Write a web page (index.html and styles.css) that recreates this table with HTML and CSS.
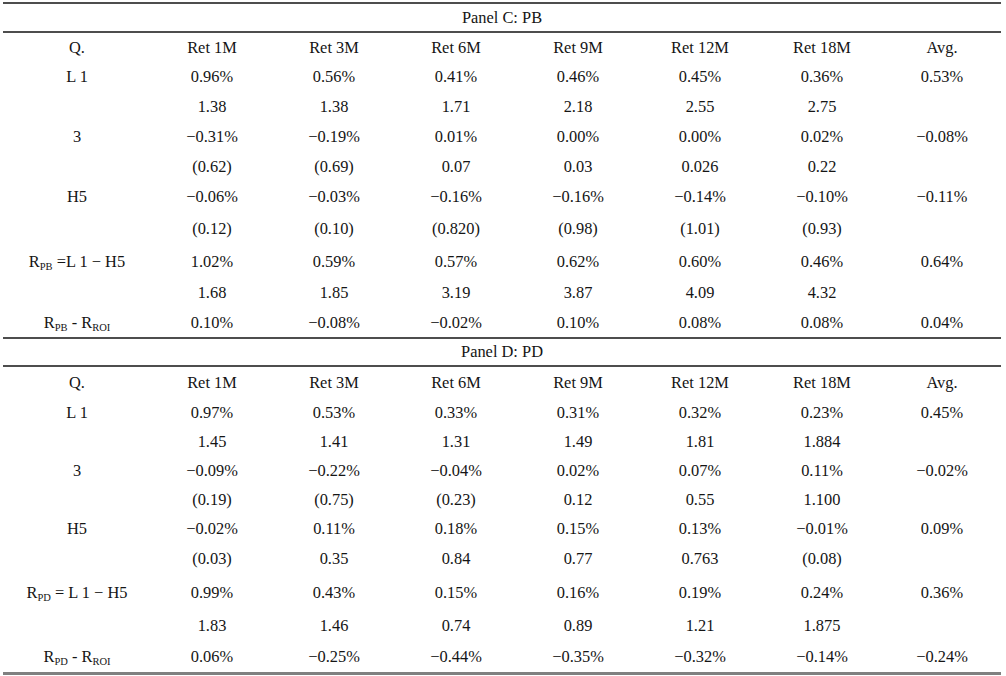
FILE: index.html
```html
<!DOCTYPE html>
<html lang="en">
<head>
<meta charset="utf-8">
<title>Panel C and D</title>
<link rel="stylesheet" href="styles.css">
</head>
<body>
<div class="table">
  <div class="panel-title pc">Panel C: PB</div>
  <div class="row h29"><span>Q.</span><span>Ret 1M</span><span>Ret 3M</span><span>Ret 6M</span><span>Ret 9M</span><span>Ret 12M</span><span>Ret 18M</span><span>Avg.</span></div>
  <div class="row h30"><span>L 1</span><span>0.96%</span><span>0.56%</span><span>0.41%</span><span>0.46%</span><span>0.45%</span><span>0.36%</span><span>0.53%</span></div>
  <div class="row h30"><span></span><span>1.38</span><span>1.38</span><span>1.71</span><span>2.18</span><span>2.55</span><span>2.75</span><span></span></div>
  <div class="row h30"><span>3</span><span>&minus;0.31%</span><span>&minus;0.19%</span><span>0.01%</span><span>0.00%</span><span>0.00%</span><span>0.02%</span><span>&minus;0.08%</span></div>
  <div class="row h29"><span></span><span>(0.62)</span><span>(0.69)</span><span>0.07</span><span>0.03</span><span>0.026</span><span>0.22</span><span></span></div>
  <div class="row h32"><span>H5</span><span>&minus;0.06%</span><span>&minus;0.03%</span><span>&minus;0.16%</span><span>&minus;0.16%</span><span>&minus;0.14%</span><span>&minus;0.10%</span><span>&minus;0.11%</span></div>
  <div class="row h32"><span></span><span>(0.12)</span><span>(0.10)</span><span>(0.820)</span><span>(0.98)</span><span>(1.01)</span><span>(0.93)</span><span></span></div>
  <div class="row h33"><span>R<sub class="sub">PB</sub> =L 1 &minus; H5</span><span>1.02%</span><span>0.59%</span><span>0.57%</span><span>0.62%</span><span>0.60%</span><span>0.46%</span><span>0.64%</span></div>
  <div class="row h30"><span></span><span>1.68</span><span>1.85</span><span>3.19</span><span>3.87</span><span>4.09</span><span>4.32</span><span></span></div>
  <div class="row h29"><span>R<sub class="sub">PB</sub> - R<sub class="sub">ROI</sub></span><span>0.10%</span><span>&minus;0.08%</span><span>&minus;0.02%</span><span>0.10%</span><span>0.08%</span><span>0.08%</span><span>0.04%</span></div>

  <div class="panel-title pd">Panel D: PD</div>
  <div class="row h31"><span>Q.</span><span>Ret 1M</span><span>Ret 3M</span><span>Ret 6M</span><span>Ret 9M</span><span>Ret 12M</span><span>Ret 18M</span><span>Avg.</span></div>
  <div class="row h29"><span>L 1</span><span>0.97%</span><span>0.53%</span><span>0.33%</span><span>0.31%</span><span>0.32%</span><span>0.23%</span><span>0.45%</span></div>
  <div class="row h29"><span></span><span>1.45</span><span>1.41</span><span>1.31</span><span>1.49</span><span>1.81</span><span>1.884</span><span></span></div>
  <div class="row h29"><span>3</span><span>&minus;0.09%</span><span>&minus;0.22%</span><span>&minus;0.04%</span><span>0.02%</span><span>0.07%</span><span>0.11%</span><span>&minus;0.02%</span></div>
  <div class="row h29"><span></span><span>(0.19)</span><span>(0.75)</span><span>(0.23)</span><span>0.12</span><span>0.55</span><span>1.100</span><span></span></div>
  <div class="row h29"><span>H5</span><span>&minus;0.02%</span><span>0.11%</span><span>0.18%</span><span>0.15%</span><span>0.13%</span><span>&minus;0.01%</span><span>0.09%</span></div>
  <div class="row h32"><span></span><span>(0.03)</span><span>0.35</span><span>0.84</span><span>0.77</span><span>0.763</span><span>(0.08)</span><span></span></div>
  <div class="row h35"><span>R<sub class="sub">PD</sub> = L 1 &minus; H5</span><span>0.99%</span><span>0.43%</span><span>0.15%</span><span>0.16%</span><span>0.19%</span><span>0.24%</span><span>0.36%</span></div>
  <div class="row h31"><span></span><span>1.83</span><span>1.46</span><span>0.74</span><span>0.89</span><span>1.21</span><span>1.875</span><span></span></div>
  <div class="row h31 last"><span>R<sub class="sub">PD</sub> - R<sub class="sub">ROI</sub></span><span>0.06%</span><span>&minus;0.25%</span><span>&minus;0.44%</span><span>&minus;0.35%</span><span>&minus;0.32%</span><span>&minus;0.14%</span><span>&minus;0.24%</span></div>
</div>
</body>
</html>
```

FILE: styles.css
```css
html, body {
  margin: 0;
  padding: 0;
  background: #ffffff;
}

body {
  font-family: "Liberation Serif", "Times New Roman", serif;
  font-size: 16.4px;
  color: #151515;
}

.table {
  margin: 2px 0 0 3px;
  width: 998px;
}

.panel-title {
  display: flex;
  align-items: center;
  justify-content: center;
  border-top: 2px solid #4d4d4d;
  border-bottom: 2px solid #4d4d4d;
}

.pc {
  height: 27px;
}

.pd {
  height: 26px;
}

.row {
  display: grid;
  grid-template-columns: 148px repeat(6, 122px) 118px;
  align-items: center;
}

.row > span {
  text-align: center;
  white-space: nowrap;
}

.h29 { height: 29px; }
.h30 { height: 30px; }
.h31 { height: 31px; }
.h32 { height: 32px; }
.h33 { height: 33px; }
.h35 { height: 35px; }

.sub {
  font-size: 10.5px;
  vertical-align: -3px;
  line-height: 0;
}

.last {
  border-bottom: 3px solid #808080;
}
```
